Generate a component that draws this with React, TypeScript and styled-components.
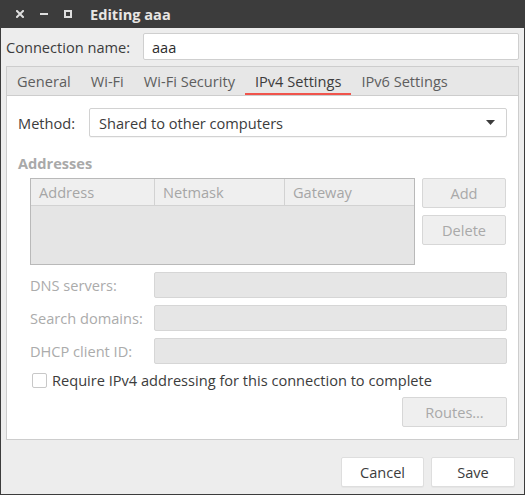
import React from "react";
import styled, { createGlobalStyle } from "styled-components";

const Global = createGlobalStyle`
  html, body { margin: 0; padding: 0; background: #ededed; }
  body {
    font-family: "Open Sans", "Noto Sans", "DejaVu Sans", sans-serif;
    font-size: 14.6px;
    color: #3c3c3c;
  }
  * { box-sizing: border-box; }
`;

const Window = styled.div`
  width: 525px;
  height: 495px;
  display: flex;
  flex-direction: column;
  background: #ededed;
  border: 1px solid #3c3c3c;
  border-top: none;
`;

const TitleBar = styled.div`
  height: 28px;
  flex: none;
  background: #3c3c3c;
  display: flex;
  align-items: center;
  padding-left: 15px;
  gap: 16px;
`;

const WinIcon = styled.svg`
  width: 8px;
  height: 8px;
  flex: none;
  display: block;
`;

const Title = styled.div`
  margin-left: 2px;
  color: #e8e6e3;
  font-weight: 700;
  font-size: 14.6px;
`;

const Body = styled.div`
  flex: 1;
  display: flex;
  flex-direction: column;
  padding: 5px 5px 7px 5px;
  min-height: 0;
`;

const ConnRow = styled.div`
  display: flex;
  align-items: center;
  height: 27px;
`;

const Label = styled.span<{ $disabled?: boolean }>`
  color: ${(p) => (p.$disabled ? "#ababab" : "#3c3c3c")};
  white-space: nowrap;
`;

const Entry = styled.div<{ $width?: number; $disabled?: boolean }>`
  width: ${(p) => (p.$width ? `${p.$width}px` : "100%")};
  height: ${(p) => (p.$disabled ? 26 : 27)}px;
  margin-left: ${(p) => (p.$width ? "auto" : "0")};
  display: flex;
  align-items: center;
  padding: 0 8px;
  background: ${(p) => (p.$disabled ? "#e6e6e6" : "#ffffff")};
  border: 1px solid ${(p) => (p.$disabled ? "#d6d6d6" : "#cfcfcf")};
  border-radius: 2px;
  color: #2c2c2c;
`;

const Notebook = styled.div`
  margin-top: 6px;
  flex: 1;
  display: flex;
  flex-direction: column;
  min-height: 0;
`;

const TabBar = styled.div`
  height: 29px;
  flex: none;
  display: flex;
  background: #e7e7e7;
  border: 1px solid #cdcdcd;
  border-bottom: none;
`;

const Tab = styled.div<{ $active?: boolean }>`
  height: 28px;
  padding: 0 10px;
  display: flex;
  align-items: center;
  color: ${(p) => (p.$active ? "#3c3c3c" : "#5e5e5e")};
  box-shadow: ${(p) => (p.$active ? "inset 0 -2px 0 #f0544c" : "none")};
  white-space: nowrap;
`;

const Panel = styled.div`
  flex: 1;
  background: #ffffff;
  border: 1px solid #cdcdcd;
  padding: 12px 11px 12px 11px;
  display: flex;
  flex-direction: column;
`;

const MethodRow = styled.div`
  display: flex;
  align-items: center;
  height: 29px;
`;

const Combo = styled.div`
  width: 418px;
  height: 29px;
  margin-left: auto;
  display: flex;
  align-items: center;
  justify-content: space-between;
  padding: 0 11px 0 9px;
  background: #ffffff;
  border: 1px solid #d2d2d2;
  border-radius: 2px;
  box-shadow: 0 1px 0 rgba(0, 0, 0, 0.04);
`;

const Arrow = styled.svg`
  width: 9px;
  height: 5px;
  display: block;
`;

const SectionTitle = styled.div`
  margin-top: 16px;
  height: 20px;
  line-height: 20px;
  font-weight: 700;
  color: #a9a9a9;
`;

const AddrBlock = styled.div`
  margin-top: 5px;
  margin-left: 12px;
  display: flex;
  gap: 7px;
  align-items: flex-start;
`;

const Table = styled.div`
  width: 385px;
  height: 87px;
  border: 1px solid #b9b9b9;
  background: #e5e5e5;
  display: flex;
  flex-direction: column;
`;

const TableHead = styled.div`
  display: grid;
  grid-template-columns: 124px 130px 1fr;
  height: 27px;
  background: #efefef;
  border-bottom: 1px solid #d2d2d2;
`;

const HeadCell = styled.div<{ $last?: boolean }>`
  display: flex;
  align-items: center;
  padding-left: 8px;
  color: #a6a6a6;
  border-right: ${(p) => (p.$last ? "none" : "1px solid #d2d2d2")};
`;

const SideButtons = styled.div`
  display: flex;
  flex-direction: column;
  gap: 7px;
`;

const Button = styled.div<{ $width: number; $disabled?: boolean }>`
  width: ${(p) => p.$width}px;
  height: 30px;
  display: flex;
  align-items: center;
  justify-content: center;
  border-radius: 2px;
  background: ${(p) => (p.$disabled ? "#efefef" : "#ffffff")};
  border: 1px solid ${(p) => (p.$disabled ? "#d7d7d7" : "#dedede")};
  color: ${(p) => (p.$disabled ? "#a9a9a9" : "#3c3c3c")};
  box-shadow: ${(p) => (p.$disabled ? "none" : "0 1px 0 rgba(0,0,0,0.03)")};
`;

const FormGrid = styled.div`
  margin-top: 7px;
  margin-left: 12px;
  display: grid;
  grid-template-columns: 124px 1fr;
  row-gap: 7px;
  align-items: center;
`;

const CheckRow = styled.div`
  margin-top: 6px;
  margin-left: 14px;
  height: 20px;
  display: flex;
  align-items: center;
  gap: 5px;
`;

const CheckBox = styled.div`
  width: 15px;
  height: 15px;
  border: 1px solid #c8c8c8;
  border-radius: 2px;
  background: #ffffff;
`;

const RoutesRow = styled.div`
  margin-top: 7px;
  display: flex;
  justify-content: flex-end;
`;

const Footer = styled.div`
  margin-top: 17px;
  display: flex;
  justify-content: flex-end;
  gap: 7px;
  padding-right: 4px;
`;

export default function App() {
  return (
    <>
      <Global />
      <Window>
        <TitleBar>
          <WinIcon viewBox="0 0 8 8">
            <path d="M1 1 L7 7 M7 1 L1 7" stroke="#dedede" strokeWidth="2" strokeLinecap="square" />
          </WinIcon>
          <WinIcon viewBox="0 0 8 8">
            <rect x="0" y="3" width="8" height="2" fill="#dedede" />
          </WinIcon>
          <WinIcon viewBox="0 0 8 8">
            <rect x="1" y="1" width="6" height="6" fill="none" stroke="#dedede" strokeWidth="2" />
          </WinIcon>
          <Title>Editing aaa</Title>
        </TitleBar>
        <Body>
          <ConnRow>
            <Label>Connection name:</Label>
            <Entry $width={376}>aaa</Entry>
          </ConnRow>
          <Notebook>
            <TabBar>
              <Tab>General</Tab>
              <Tab>Wi-Fi</Tab>
              <Tab>Wi-Fi Security</Tab>
              <Tab $active>IPv4 Settings</Tab>
              <Tab>IPv6 Settings</Tab>
            </TabBar>
            <Panel>
              <MethodRow>
                <Label>Method:</Label>
                <Combo>
                  <span>Shared to other computers</span>
                  <Arrow viewBox="0 0 9 5">
                    <path d="M0 0 H9 L4.5 5 Z" fill="#3c3c3c" />
                  </Arrow>
                </Combo>
              </MethodRow>
              <SectionTitle>Addresses</SectionTitle>
              <AddrBlock>
                <Table>
                  <TableHead>
                    <HeadCell>Address</HeadCell>
                    <HeadCell>Netmask</HeadCell>
                    <HeadCell $last>Gateway</HeadCell>
                  </TableHead>
                </Table>
                <SideButtons>
                  <Button $width={84} $disabled>Add</Button>
                  <Button $width={84} $disabled>Delete</Button>
                </SideButtons>
              </AddrBlock>
              <FormGrid>
                <Label $disabled>DNS servers:</Label>
                <Entry $disabled />
                <Label $disabled>Search domains:</Label>
                <Entry $disabled />
                <Label $disabled>DHCP client ID:</Label>
                <Entry $disabled />
              </FormGrid>
              <CheckRow>
                <CheckBox />
                <Label>Require IPv4 addressing for this connection to complete</Label>
              </CheckRow>
              <RoutesRow>
                <Button $width={105} $disabled>Routes…</Button>
              </RoutesRow>
            </Panel>
          </Notebook>
          <Footer>
            <Button $width={83}>Cancel</Button>
            <Button $width={84}>Save</Button>
          </Footer>
        </Body>
      </Window>
    </>
  );
}
